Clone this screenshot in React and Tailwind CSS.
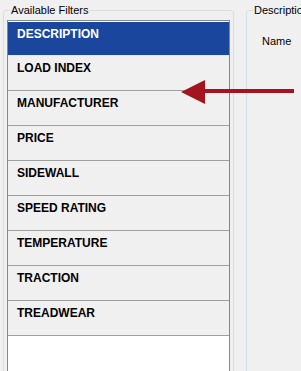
import React from 'react';

const filters = [
  'DESCRIPTION',
  'LOAD INDEX',
  'MANUFACTURER',
  'PRICE',
  'SIDEWALL',
  'SPEED RATING',
  'TEMPERATURE',
  'TRACTION',
  'TREADWEAR',
];

const ui = { fontFamily: '"Liberation Sans", Arial, sans-serif' };

export default function App() {
  return (
    <div className="relative w-[301px] h-[371px] overflow-hidden bg-[#f0f0f0] flex items-start" style={ui}>
      {/* Available Filters group */}
      <fieldset className="ml-[3px] mt-[3px] w-[231px] h-[400px] shrink-0 border border-[#dcdcdc] rounded-[3px] px-[3px]">
        <legend className="ml-[3px] px-[1px] text-[11px] leading-[14px] text-black">Available Filters</legend>
        <div className="mt-[3px] w-[223px] h-[400px] border border-[#828790] bg-white">
          {filters.map((name, i) => (
            <div
              key={name}
              className={
                i === 0
                  ? 'h-[35px] pl-[9px] pt-[5px] bg-[#1b469e] border-t border-b border-t-white border-b-[#e8e8e8] text-white text-[12px] leading-[14px] font-bold'
                  : 'h-[35px] pl-[9px] pt-[5px] bg-[#f0f0f0] border-b border-[#a0a0a0] text-black text-[12px] leading-[14px] font-bold'
              }
            >
              {name}
            </div>
          ))}
        </div>
      </fieldset>

      {/* Description group */}
      <fieldset className="ml-[12px] mt-[3px] w-[100px] h-[400px] shrink-0 border border-[#d5dfe5] rounded-[3px]">
        <legend className="ml-[6px] px-[1px] text-[11px] leading-[14px] text-black whitespace-nowrap">Description</legend>
        <div className="pl-[15px] pt-[17px] text-[11px] leading-[14px] text-black">Name</div>
      </fieldset>

      {/* annotation arrow */}
      <svg className="absolute left-[181px] top-[80px]" width="113" height="25" viewBox="0 0 113 25">
        <polygon points="0,12 24,0 24,9 113,9 113,13 24,13 24,24" fill="#a3141e" />
      </svg>
    </div>
  );
}
